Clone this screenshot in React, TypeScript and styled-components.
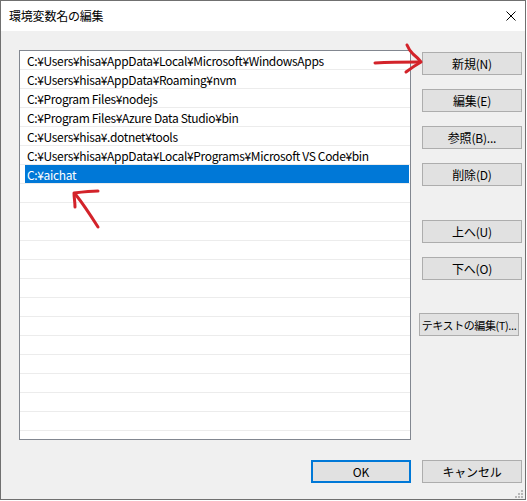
import React from "react";
import styled, { createGlobalStyle } from "styled-components";

const GlobalStyle = createGlobalStyle`
  html, body {
    margin: 0;
    padding: 0;
    background: #ffffff;
  }
  body {
    font-family: "Noto Sans CJK JP", "Noto Sans", sans-serif;
  }
`;

const Window = styled.div`
  position: relative;
  box-sizing: border-box;
  width: 526px;
  height: 500px;
  border: 1px solid #707070;
  display: flex;
  flex-direction: column;
  background: #f0f0f0;
  font-size: 12px;
  color: #000;
`;

const TitleBar = styled.div`
  height: 30px;
  flex: none;
  background: #ffffff;
  display: flex;
  align-items: center;
  justify-content: space-between;
  padding: 0 9px 0 8px;
`;

const Title = styled.span`
  font-size: 12px;
  line-height: 16px;
  letter-spacing: -0.2px;
`;

const CloseIcon = styled.svg`
  display: block;
  width: 10px;
  height: 10px;
`;

const Body = styled.div`
  flex: 1;
  display: grid;
  grid-template-columns: 392px 100px;
  grid-template-rows: 390px 23px;
  column-gap: 11px;
  row-gap: 20px;
  padding: 19px 0 0 18px;
`;

const List = styled.div`
  box-sizing: border-box;
  border: 1px solid #828790;
  background: #ffffff;
  overflow: hidden;
`;

const Row = styled.div`
  box-sizing: border-box;
  height: 19px;
  border-bottom: 1px solid #ececec;
  padding: 0 1px 0 5px;
  display: flex;
`;

const RowText = styled.div<{ $selected?: boolean }>`
  flex: 1;
  padding-left: 2px;
  line-height: 19px;
  letter-spacing: -0.35px;
  white-space: nowrap;
  background: ${(p) => (p.$selected ? "#0078d7" : "transparent")};
  color: ${(p) => (p.$selected ? "#ffffff" : "#000000")};
`;

const ButtonColumn = styled.div`
  display: flex;
  flex-direction: column;
  padding-top: 2px;
  gap: 14px;
`;

const Button = styled.button<{ $extra?: number; $shift?: number; $default?: boolean; $compact?: boolean }>`
  box-sizing: border-box;
  width: 100px;
  height: 23px;
  flex: none;
  padding: 0;
  margin-top: ${(p) => p.$extra ?? 0}px;
  margin-left: ${(p) => -(p.$shift ?? 0)}px;
  border: ${(p) => (p.$default ? "2px solid #0078d7" : "1px solid #adadad")};
  background: #e1e1e1;
  color: #000;
  font-family: inherit;
  font-size: ${(p) => (p.$compact ? 11 : 12)}px;
  letter-spacing: ${(p) => (p.$compact ? -0.4 : -0.2)}px;
  line-height: 18px;
  white-space: nowrap;
  overflow: hidden;
`;

const OkButton = styled(Button)`
  justify-self: end;
`;

const Overlay = styled.svg`
  position: absolute;
  left: -1px;
  top: -1px;
  width: 526px;
  height: 500px;
  pointer-events: none;
`;

const paths = [
  "C:¥Users¥hisa¥AppData¥Local¥Microsoft¥WindowsApps",
  "C:¥Users¥hisa¥AppData¥Roaming¥nvm",
  "C:¥Program Files¥nodejs",
  "C:¥Program Files¥Azure Data Studio¥bin",
  "C:¥Users¥hisa¥.dotnet¥tools",
  "C:¥Users¥hisa¥AppData¥Local¥Programs¥Microsoft VS Code¥bin",
  "C:¥aichat",
];

const TOTAL_ROWS = 21;
const SELECTED = 6;

export default function App() {
  const rows = Array.from({ length: TOTAL_ROWS }, (_, i) => paths[i] ?? "");
  return (
    <>
      <GlobalStyle />
      <Window>
        <TitleBar>
          <Title>環境変数名の編集</Title>
          <CloseIcon viewBox="0 0 10 10">
            <path d="M0.5 0.5 L9.5 9.5 M9.5 0.5 L0.5 9.5" stroke="#000" strokeWidth="1" fill="none" />
          </CloseIcon>
        </TitleBar>
        <Body>
          <List>
            {rows.map((text, i) => (
              <Row key={i}>
                <RowText $selected={i === SELECTED}>{text}</RowText>
              </Row>
            ))}
          </List>
          <ButtonColumn>
            <Button>新規(N)</Button>
            <Button>編集(E)</Button>
            <Button>参照(B)...</Button>
            <Button>削除(D)</Button>
            <Button $extra={20}>上へ(U)</Button>
            <Button>下へ(O)</Button>
            <Button $extra={19} $shift={3} $compact>
              テキストの編集(T)...
            </Button>
          </ButtonColumn>
          <OkButton $default>OK</OkButton>
          <Button>キャンセル</Button>
        </Body>
        <Overlay viewBox="0 0 526 500">
          {/* size grip */}
          <g fill="#b8b8b8">
            <rect x="521" y="490" width="2" height="2" />
            <rect x="518" y="493" width="2" height="2" />
            <rect x="521" y="493" width="2" height="2" />
            <rect x="515" y="496" width="2" height="2" />
            <rect x="518" y="496" width="2" height="2" />
            <rect x="521" y="496" width="2" height="2" />
          </g>
          {/* hand-drawn red arrows */}
          <g stroke="#d3232a" strokeWidth="3" strokeLinecap="round" strokeLinejoin="round" fill="none">
            <path d="M375 63 C392 62 406 62 420 62" />
            <path d="M407 45 Q409 50 413 54 Q418 58 421 62 Q414 66 406 72" />
            <path d="M98 191 C90 191 82 192 74 193 C74 197 75 202 75 207" />
            <path d="M76 195 C84 205 91 216 98 227" />
          </g>
        </Overlay>
      </Window>
    </>
  );
}
